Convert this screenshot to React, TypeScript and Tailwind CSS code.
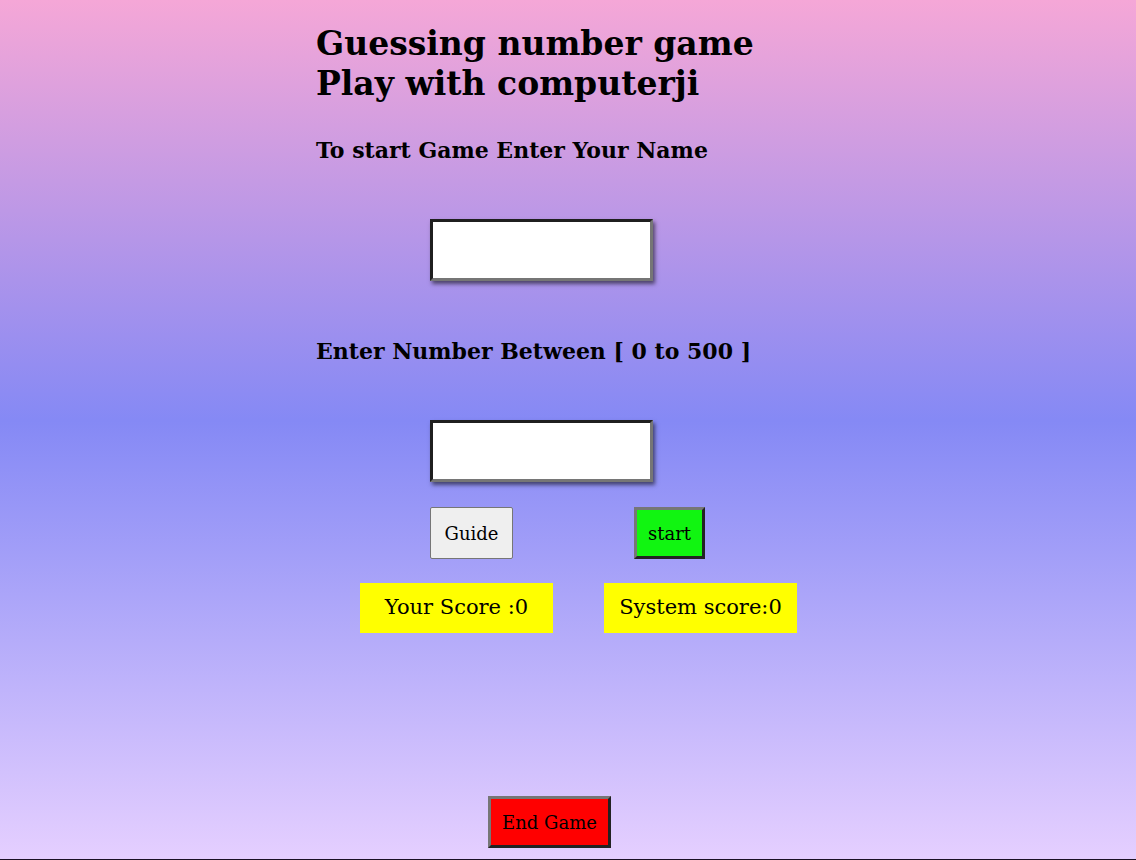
export default function App() {
  return (
    <div
      className="min-h-[860px] w-full bg-[linear-gradient(to_bottom,#f5a7d7_0%,#8589f5_49%,#e5cfff_100%)] text-black border-b border-[#1a1124]"
      style={{ fontFamily: "Georgia, 'DejaVu Serif', serif" }}
    >
      <div className="pl-[316px] pt-[24px]">
        <h1 className="text-[33px] font-bold leading-[40px]">
          Guessing number game
          <br />
          Play with computerji
        </h1>

        <h3 className="mt-[33px] text-[22px] font-bold leading-[26px]">
          To start Game Enter Your Name
        </h3>

        <div className="mt-[56px] pl-[114px]">
          <input
            type="text"
            className="block h-[62px] w-[223px] bg-white border-[3px] border-t-[#1f1f1f] border-l-[#1f1f1f] border-r-[#767676] border-b-[#767676] shadow-[2px_3px_4px_rgba(0,0,0,0.55)] outline-none"
          />
        </div>

        <h3 className="mt-[57px] text-[22px] font-bold leading-[26px]">
          Enter Number Between [ 0 to 500 ]
        </h3>

        <div className="mt-[56px] pl-[114px]">
          <input
            type="text"
            className="block h-[62px] w-[223px] bg-white border-[3px] border-t-[#1f1f1f] border-l-[#1f1f1f] border-r-[#767676] border-b-[#767676] shadow-[2px_3px_4px_rgba(0,0,0,0.55)] outline-none"
          />
        </div>

        <div className="mt-[25px] flex pl-[114px] gap-[121px]">
          <button
            type="button"
            className="h-[52px] w-[83px] rounded-[2px] border border-[#767676] bg-[#efefef] text-[18px]"
          >
            Guide
          </button>
          <button
            type="button"
            className="h-[52px] w-[71px] border-[3px] border-t-[#767676] border-l-[#767676] border-r-[#222] border-b-[#222] bg-[#11f511] text-[18px]"
          >
            start
          </button>
        </div>

        <div className="mt-[24px] flex pl-[44px] gap-[51px]">
          <div className="flex h-[50px] w-[193px] items-center justify-center bg-[#ffff00] text-[21px]">
            Your Score :0
          </div>
          <div className="flex h-[50px] w-[193px] items-center justify-center bg-[#ffff00] text-[21px]">
            System score:0
          </div>
        </div>

        <div className="mt-[163px] pl-[172px]">
          <button
            type="button"
            className="h-[52px] w-[123px] border-[3px] border-t-[#767676] border-l-[#767676] border-r-[#222] border-b-[#222] bg-[#ff0000] text-[18px]"
          >
            End Game
          </button>
        </div>
      </div>
    </div>
  );
}
